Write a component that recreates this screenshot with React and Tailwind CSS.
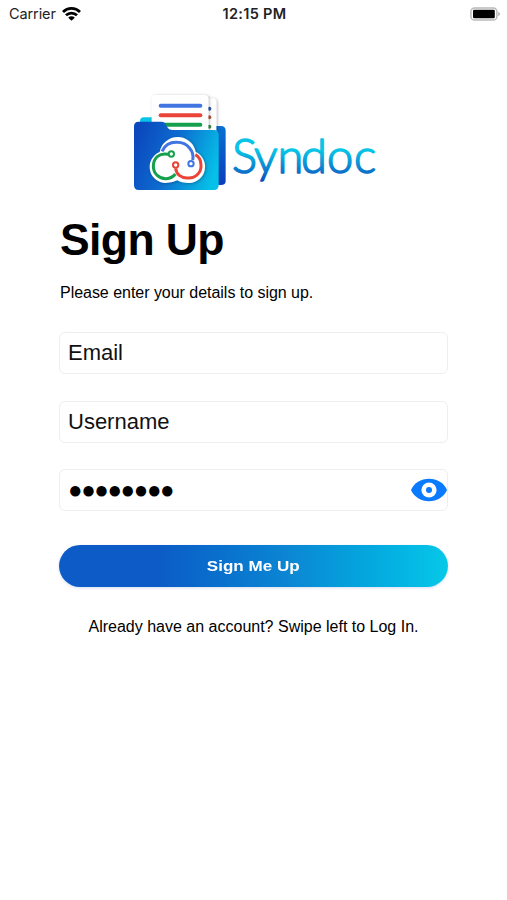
import { useState } from "react";

function StatusBar() {
  return (
    <header className="grid h-7 grid-cols-3 items-center pr-[7px] pl-[9px] font-['Inter',sans-serif] text-[#222]">
      <div className="flex items-center gap-[6px]">
        <span className="text-[14.5px] leading-none tracking-[-0.1px]">Carrier</span>
        <svg className="h-[14px] w-[19px]" viewBox="0 0 19 14" fill="none" stroke="#000" strokeWidth="2.8">
          <path d="M1 4.900a12.200 12.200 0 0 1 17 0" />
          <path d="M4 8.300a7.800 7.800 0 0 1 11 0" />
          <path d="M9.500 13.800 6.200 10.700a4.600 4.600 0 0 1 6.600 0z" fill="#000" stroke="none" />
        </svg>
      </div>
      <span className="text-center text-[14.5px] leading-none font-semibold tracking-[0.3px] whitespace-nowrap">
        12:15 PM
      </span>
      <svg className="h-[14px] w-[30px] justify-self-end" viewBox="0 0 30 14">
        <rect x="0.9" y="0.9" width="26" height="12.2" rx="3.6" fill="#fff" stroke="#b9b9b9" strokeWidth="1.5" />
        <rect x="3" y="2.8" width="21.8" height="8.4" rx="1.2" fill="#000" />
        <path d="M28.3 4.8v4.4q1.6-.8 1.6-2.2t-1.6-2.2" fill="#a9a9a9" />
      </svg>
    </header>
  );
}

function Logo() {
  return (
    <svg className="h-[115px] w-[260px]" viewBox="0 0 260 115" role="img" aria-label="Syndoc">
      <defs>
        <linearGradient id="front" x1="0" y1="0.3" x2="1" y2="0.6">
          <stop offset="0" stopColor="#0b48bd" />
          <stop offset="0.45" stopColor="#0d6bd0" />
          <stop offset="1" stopColor="#06c0e7" />
        </linearGradient>
        <linearGradient id="back" x1="0" y1="0" x2="0" y2="1">
          <stop offset="0" stopColor="#0872d2" />
          <stop offset="1" stopColor="#0b3dbb" />
        </linearGradient>
        <linearGradient id="word" gradientUnits="userSpaceOnUse" x1="0" y1="50" x2="0" y2="102">
          <stop offset="0.3" stopColor="#08c4e5" />
          <stop offset="0.68" stopColor="#0b79cc" />
          <stop offset="1" stopColor="#0b35b2" />
        </linearGradient>
        <filter id="shade" x="-20%" y="-20%" width="140%" height="140%">
          <feDropShadow dx="3" dy="2" stdDeviation="5" floodColor="#000" floodOpacity="0.3" />
        </filter>
      </defs>

      <g transform="scale(0.3333)">
        {/* folder back */}
        <path d="M45 120v-12q0-11 12-11h50v30z" fill="#08c4e6" />
        <path d="M180 123h108q14 0 14 14v150q0 13-14 13H180z" fill="url(#back)" />

        {/* sheets */}
        <rect x="110" y="40" width="164" height="130" rx="12" fill="#fff" filter="url(#shade)" />
        <g>
          <circle cx="253" cy="71" r="6" fill="#2b55a8" />
          <circle cx="253" cy="97" r="6" fill="#b4583f" />
          <circle cx="253" cy="125" r="6" fill="#3c8b50" />
        </g>
        <rect x="80" y="30" width="170" height="140" rx="12" fill="#fff" filter="url(#shade)" />
        <g strokeWidth="12" strokeLinecap="round">
          <path d="M107 62h119" stroke="#4075e2" />
          <path d="M107 90.500h119" stroke="#ea4438" />
          <path d="M107 119h119" stroke="#15a04d" />
        </g>

        {/* folder front */}
        <path
          d="M27 124q0-14 14-14h68q10 0 14 9l4 8q4 8 14 8h126q14 0 14 14v152q0 14-14 14H41q-14 0-14-14z"
          fill="url(#front)"
        />

        {/* cloud */}
        <path
          d="M104 201A54.900 54.900 0 0 1 212 201A48.800 48.800 0 0 1 192 294Q170 294 157 286Q142 294 122 294A48.300 48.300 0 0 1 104 201z"
          fill="#fff"
          filter="url(#shade)"
        />
        <g fill="none" strokeWidth="9">
          <path d="M111 199C121 177 138 171 157 172C187 172 209 199 203 225" stroke="#4075e2" />
          <circle cx="198" cy="236" r="8" stroke="#4075e2" strokeWidth="6" />
          <path d="M130 208C103 202 86 219 85 242C85 267 103 282 124 281C137 280 145 275 151 267" stroke="#15a04d" />
          <circle cx="139" cy="207" r="8" stroke="#15a04d" strokeWidth="6" />
          <path d="M152 250C154 268 169 281 191 279C213 279 229 262 228 241C228 225 222 215 211 209" stroke="#ea4438" />
          <circle cx="152" cy="240" r="8" stroke="#ea4438" strokeWidth="6" />
        </g>
      </g>

      <text
        x="107 129 152.500 176 202 229"
        y="87.500"
        className="font-['Lato',sans-serif] text-[47px] font-light"
        fill="url(#word)"
        stroke="url(#word)"
        strokeWidth="1.5"
        strokeLinejoin="round"
      >
        Syndoc
      </text>
    </svg>
  );
}

function EyeIcon() {
  return (
    <svg className="h-6 w-9" viewBox="0 0 36 24">
      <path d="M0 12C3 5 10 .8 18 .8S33 5 36 12C33 19 26 23.200 18 23.200S3 19 0 12z" fill="#0a7aff" />
      <circle cx="18" cy="12" r="7.600" fill="#fff" />
      <circle cx="18" cy="12" r="3" fill="#0a7aff" />
    </svg>
  );
}

function Field({ children }) {
  return (
    <div className="flex h-[42px] items-center justify-between rounded-[6px] border border-[#eeeeee] pl-2 text-[22px] leading-none text-[#111]">
      {children}
    </div>
  );
}

export default function App() {
  const [visible, setVisible] = useState(false);

  return (
    <div className="flex h-[900px] w-[507px] flex-col overflow-hidden bg-white font-['Liberation_Sans',Arial,sans-serif] text-black">
      <StatusBar />

      <main className="flex flex-col px-[59px]">
        <div className="mt-[57px] ml-[66px]">
          <Logo />
        </div>

        <h1 className="mt-[14px] pl-px text-[44.500px] leading-[52px] font-bold tracking-[-0.6px] whitespace-nowrap">
          Sign Up
        </h1>
        <p className="mt-[17px] pl-px text-[16px] leading-5 tracking-[-0.030px] whitespace-nowrap">
          Please enter your details to sign up.
        </p>

        <form className="mt-[29px] flex flex-col gap-[26.500px]" onSubmit={(e) => e.preventDefault()}>
          <Field>Email</Field>
          <Field>Username</Field>
          <Field>
            <span className="text-[24px] tracking-[-1.35px] text-black">{visible ? "password" : "●●●●●●●●"}</span>
            <button type="button" aria-label="Toggle password" onClick={() => setVisible(!visible)}>
              <EyeIcon />
            </button>
          </Field>

          <button
            type="submit"
            className="mt-[7px] h-[42px] rounded-full bg-linear-to-r from-[#0d5bc6] from-25% via-[#0c85d3] via-58% to-[#07c8e8] text-[15.500px] font-bold text-white shadow-[0_1px_3px_rgba(20,60,180,0.18)]"
          >
            <span className="inline-block scale-x-110">Sign Me Up</span>
          </button>
        </form>

        <p className="mt-[30px] text-center text-[16px] leading-5 whitespace-nowrap">
          Already have an account? Swipe left to Log In.
        </p>
      </main>
    </div>
  );
}
